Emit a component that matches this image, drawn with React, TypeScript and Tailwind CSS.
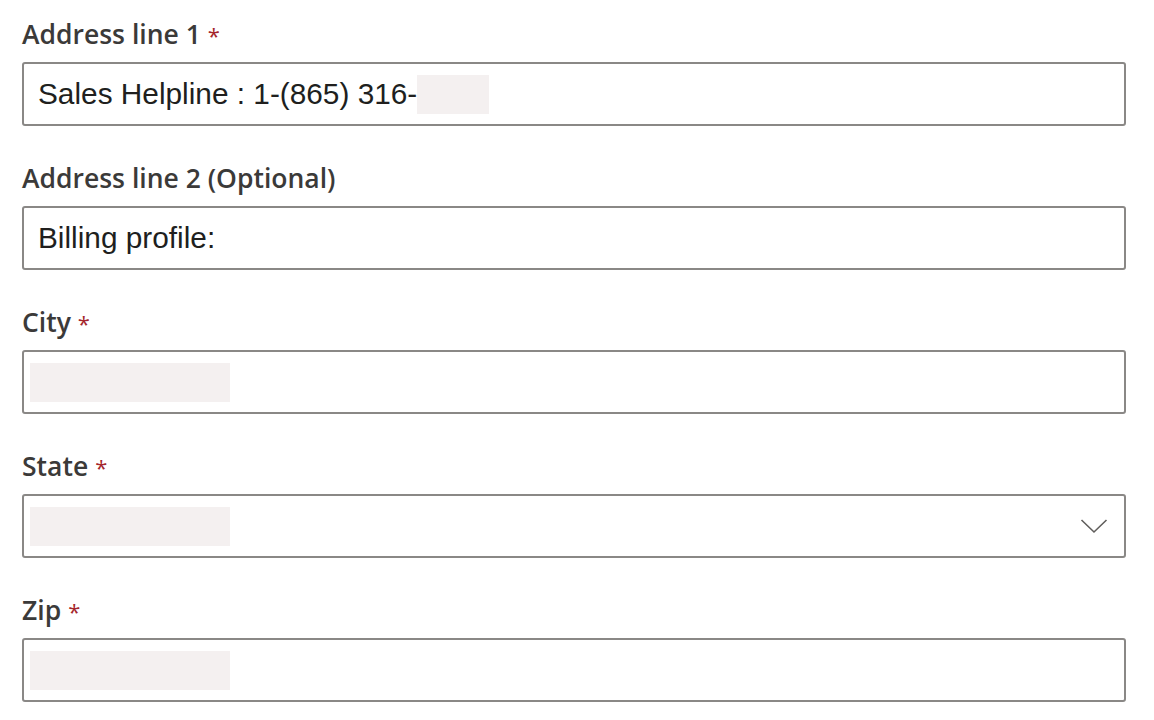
import React from 'react';

interface FieldProps {
  label: string;
  required?: boolean;
  optional?: boolean;
  children: React.ReactNode;
}

function Field({ label, required, optional, children }: FieldProps) {
  return (
    <div className="flex flex-col">
      <label className="mb-[14px] h-[28px] text-[26.5px] leading-[28px] font-semibold text-[#3b3a39] [font-family:'Open_Sans',sans-serif]">
        {label}
        {optional && ' (Optional)'}
        {required && <span className="ml-[7px] text-[22px] font-normal text-[#a4262c]">*</span>}
      </label>
      {children}
    </div>
  );
}

function Redacted({ width }: { width: string }) {
  return <span className={`inline-block h-[39px] ${width} bg-[#f4f0f0]`} />;
}

function Box({ children }: { children?: React.ReactNode }) {
  return (
    <div className="flex h-[64px] items-center rounded-[3px] border-2 border-[#8a8886] bg-white pl-[14px] pr-[16px] text-[29.8px] text-[#201f1e] [font-family:'Liberation_Sans',Arial,sans-serif]">
      {children}
    </div>
  );
}

export default function App() {
  return (
    <div className="min-h-[720px] w-[1154px] bg-white pl-[22px] pr-[28px] pt-[20px]">
      <div className="flex flex-col gap-[38px]">
        <Field label="Address line 1" required>
          <Box>
            <span>Sales Helpline : 1-(865) 316-</span>
            <Redacted width="w-[72px]" />
          </Box>
        </Field>
        <Field label="Address line 2" optional>
          <Box>
            <span>Billing profile:</span>
          </Box>
        </Field>
        <Field label="City" required>
          <div className="flex h-[64px] items-center rounded-[3px] border-2 border-[#8a8886] bg-white pl-[6px]">
            <Redacted width="w-[200px]" />
          </div>
        </Field>
        <Field label="State" required>
          <div className="flex h-[64px] items-center justify-between rounded-[3px] border-2 border-[#8a8886] bg-white pl-[6px] pr-[16px]">
            <Redacted width="w-[200px]" />
            <svg width="28" height="16" viewBox="0 0 28 16" fill="none">
              <path d="M1.5 2 L14 14 L26.5 2" stroke="#605e5c" strokeWidth="1.6" />
            </svg>
          </div>
        </Field>
        <Field label="Zip" required>
          <div className="flex h-[64px] items-center rounded-[3px] border-2 border-[#8a8886] bg-white pl-[6px]">
            <Redacted width="w-[200px]" />
          </div>
        </Field>
      </div>
    </div>
  );
}
